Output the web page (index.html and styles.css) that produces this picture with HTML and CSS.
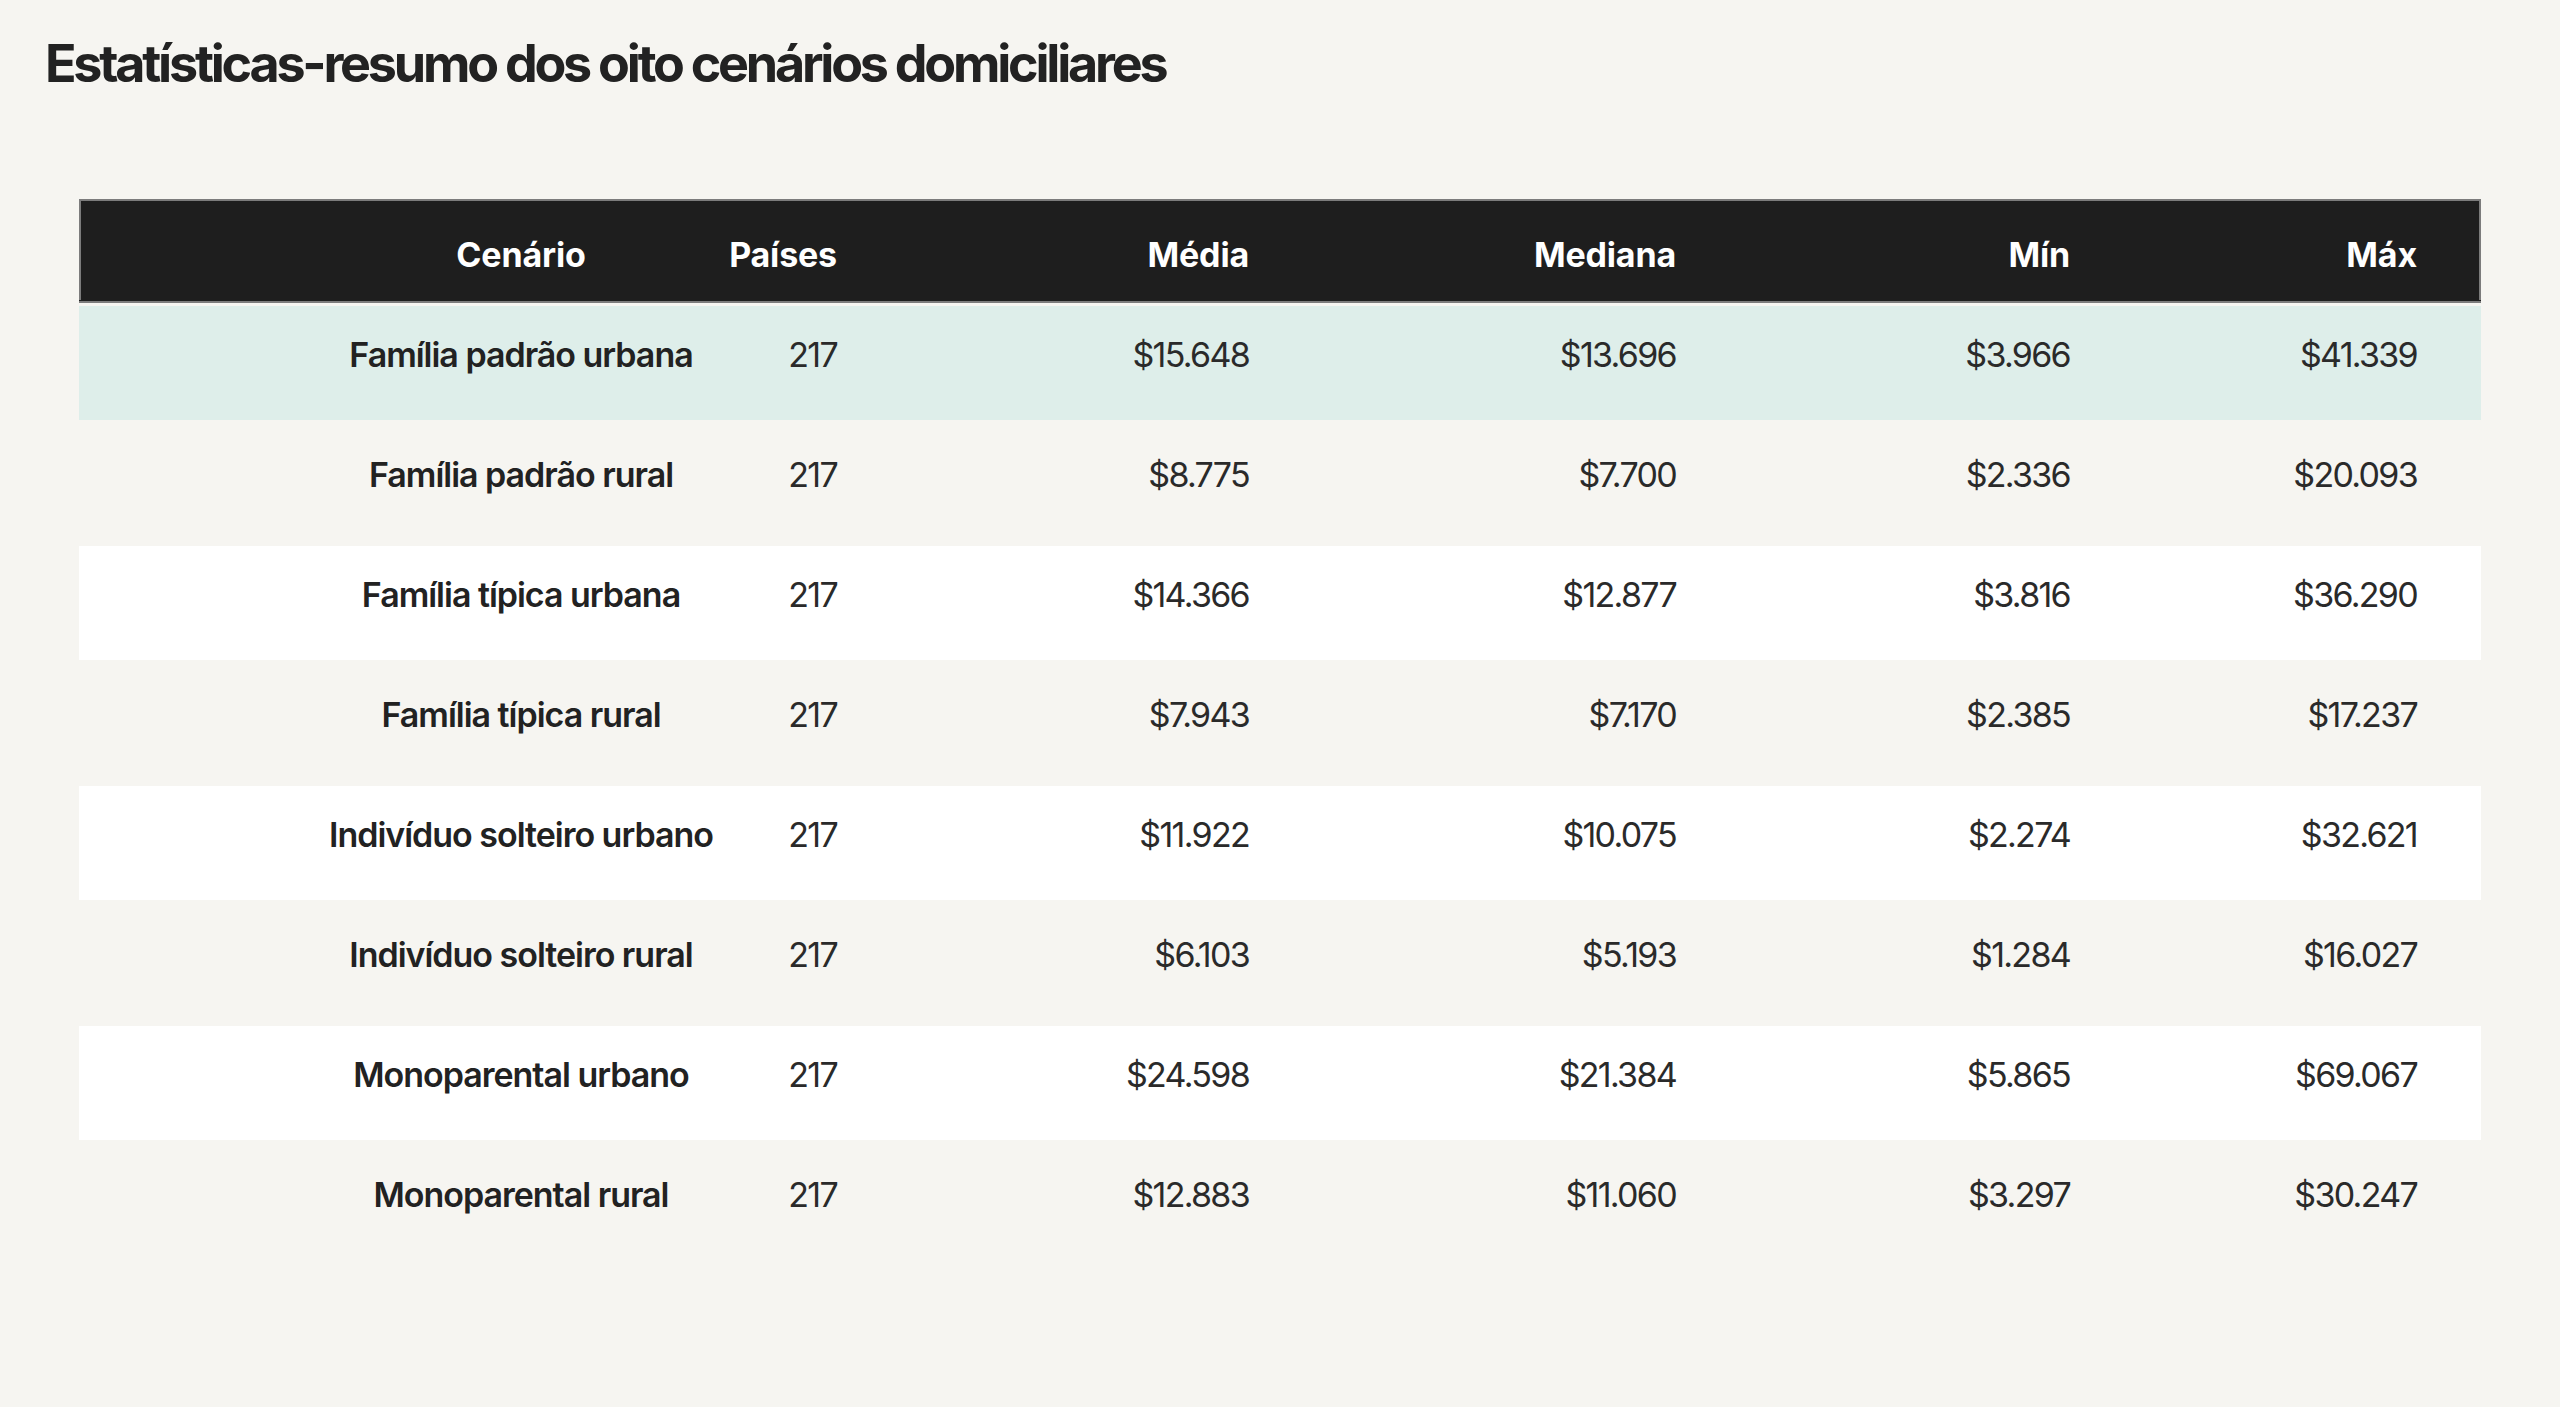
FILE: index.html
```html
<!DOCTYPE html>
<html lang="pt">
<head>
<meta charset="utf-8">
<title>Estatísticas-resumo dos oito cenários domiciliares</title>
<link rel="stylesheet" href="styles.css">
</head>
<body>
<main class="page">
  <h1 class="title">Estatísticas-resumo dos oito cenários domiciliares</h1>
  <table class="stats">
    <colgroup>
      <col class="c-name">
      <col class="c-count">
      <col class="c-mean">
      <col class="c-median">
      <col class="c-min">
      <col class="c-max">
    </colgroup>
    <thead>
      <tr>
        <th class="name">Cenário</th>
        <th>Países</th>
        <th>Média</th>
        <th>Mediana</th>
        <th>Mín</th>
        <th>Máx</th>
      </tr>
    </thead>
    <tbody>
      <tr class="highlight">
        <td class="name">Família padrão urbana</td><td>217</td><td>$15.648</td><td>$13.696</td><td>$3.966</td><td>$41.339</td>
      </tr>
      <tr>
        <td class="name">Família padrão rural</td><td>217</td><td>$8.775</td><td>$7.700</td><td>$2.336</td><td>$20.093</td>
      </tr>
      <tr class="alt">
        <td class="name">Família típica urbana</td><td>217</td><td>$14.366</td><td>$12.877</td><td>$3.816</td><td>$36.290</td>
      </tr>
      <tr>
        <td class="name">Família típica rural</td><td>217</td><td>$7.943</td><td>$7.170</td><td>$2.385</td><td>$17.237</td>
      </tr>
      <tr class="alt">
        <td class="name">Indivíduo solteiro urbano</td><td>217</td><td>$11.922</td><td>$10.075</td><td>$2.274</td><td>$32.621</td>
      </tr>
      <tr>
        <td class="name">Indivíduo solteiro rural</td><td>217</td><td>$6.103</td><td>$5.193</td><td>$1.284</td><td>$16.027</td>
      </tr>
      <tr class="alt">
        <td class="name">Monoparental urbano</td><td>217</td><td>$24.598</td><td>$21.384</td><td>$5.865</td><td>$69.067</td>
      </tr>
      <tr>
        <td class="name">Monoparental rural</td><td>217</td><td>$12.883</td><td>$11.060</td><td>$3.297</td><td>$30.247</td>
      </tr>
    </tbody>
  </table>
</main>
</body>
</html>
```

FILE: styles.css
```css
html, body {
  margin: 0;
  padding: 0;
  background: #f6f5f1;
}

body {
  font-family: Inter, "Liberation Sans", sans-serif;
  color: #232323;
  min-height: 1407px;
}

.page {
  padding: 33px 0 0 45px;
}

.title {
  margin: 0;
  font-size: 52px;
  line-height: 62px;
  font-weight: 700;
  letter-spacing: -0.062em;
  color: #222222;
}

.stats {
  margin: 98px 0 0 34px;
  width: 2402px;
  table-layout: fixed;
  border-collapse: separate;
  border-spacing: 0 6px;
  font-size: 34px;
  line-height: 51px;
}

.c-name { width: 650px; }
.c-count { width: 172px; }
.c-mean { width: 412px; }
.c-median { width: 427px; }
.c-min { width: 394px; }
.c-max { width: 347px; }

.stats th,
.stats td {
  text-align: right;
  padding-left: 0;
  padding-right: 64px;
  white-space: nowrap;
}

.stats th.name,
.stats td.name {
  text-align: center;
  padding-left: 242px;
  padding-right: 8px;
}

.stats th {
  background: #1e1e1e;
  color: #ffffff;
  font-weight: 700;
  letter-spacing: -0.005em;
  padding-top: 30px;
  padding-bottom: 20px;
  box-shadow: inset 0 2px 0 #7c7c7c, 0 1px 0 #1e1e1e, 0 3px 0 #7c7c7c;
}

.stats th:first-child {
  box-shadow: inset 0 2px 0 #7c7c7c, inset 2px 0 0 #7c7c7c, 0 1px 0 #1e1e1e, 0 3px 0 #7c7c7c;
}

.stats th:last-child {
  box-shadow: inset 0 2px 0 #7c7c7c, inset -2px 0 0 #7c7c7c, 0 1px 0 #1e1e1e, 0 3px 0 #7c7c7c;
}

.stats td {
  padding-top: 23px;
  padding-bottom: 40px;
  font-weight: 400;
  letter-spacing: -0.05em;
  color: #2a2a2a;
}

.stats td.name {
  font-weight: 600;
  letter-spacing: -0.03em;
  color: #222222;
}

.stats tr.highlight td {
  background: #deeeea;
}

.stats tr.alt td {
  background: #ffffff;
}
```
